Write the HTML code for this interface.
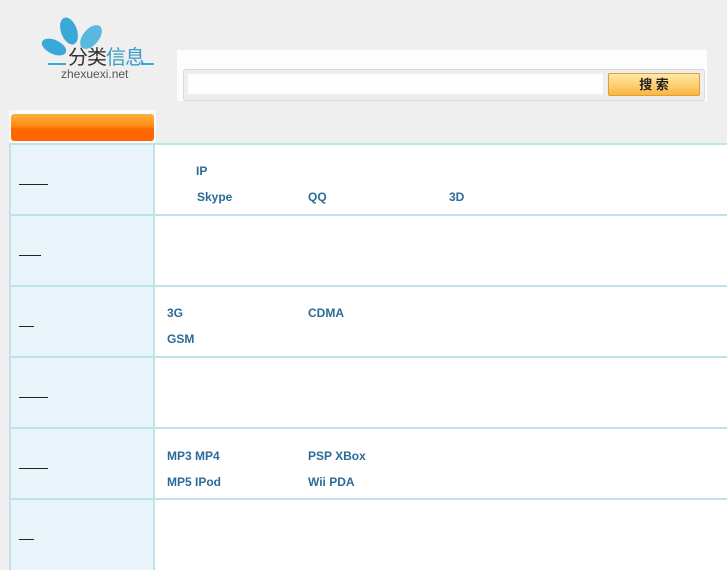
<!DOCTYPE html><html><head><meta charset="utf-8"><style>
body{margin:0;width:727px;height:545px;background:#efefef;position:relative;overflow:hidden;font-family:"Liberation Sans","Noto Sans CJK SC",sans-serif}
.a{position:absolute}
.t{position:absolute;font-size:12px;font-weight:bold;color:#2c6b98;line-height:14px}
.l{position:absolute;height:1px;background:#222;left:19px}
.row{position:absolute;left:9px;width:718px;height:70px;border-top:2px solid #bfe3ea}
.lc{position:absolute;left:0;top:0;width:146px;height:70px;background:#eaf4fb;border-left:2px solid #bfe3ea;border-right:2px solid #bfe3ea;box-sizing:border-box}
.rc{position:absolute;left:146px;top:0;right:0;height:70px;background:#fff}
</style></head><body>
<svg class="a" style="left:38px;top:15px" width="120" height="55">
<ellipse cx="31" cy="16" rx="8" ry="14" fill="#3aa8d8" transform="rotate(-20 31 16)"/>
<ellipse cx="53" cy="22" rx="8" ry="14" fill="#5ab8e0" transform="rotate(40 53 22)"/>
<ellipse cx="16" cy="32" rx="13" ry="7" fill="#3aa8d8" transform="rotate(25 16 32)"/>
<rect x="10" y="48" width="18" height="2" fill="#3aa8d8"/><rect x="103" y="48" width="13" height="2" fill="#3aa8d8"/>
</svg>
<div class="a" style="left:68px;top:47px;font-size:20px;color:#333;line-height:22px;letter-spacing:-1px">分类<span style="color:#3a9cc8">信息</span></div>
<div class="a" style="left:61px;top:67px;font-size:12px;color:#555">zhexuexi.net</div>
<div class="a" style="left:177px;top:50px;width:530px;height:51px;background:#fcfdfd"></div>
<div class="a" style="left:183px;top:69px;width:520px;height:30px;border:1px solid #d8d8d8;border-radius:3px;background:#eee"></div>
<div class="a" style="left:188px;top:74px;width:415px;height:20px;background:#fcfdfd"></div>
<div class="a" style="left:608px;top:73px;width:90px;height:21px;border:1px solid #d9a040;border-radius:2px;background:linear-gradient(#ffe9a8,#fbb640);font-size:13px;font-weight:bold;text-align:center;line-height:21px;color:#222">搜 索</div>
<div class="a" style="left:9px;top:110px;width:147px;height:34px;background:#fafafa"></div>
<div class="a" style="left:11px;top:114px;width:143px;height:27px;border-radius:3px;background:linear-gradient(#ffb040,#ff8a10 45%,#ff6a00 55%,#ff6400)"></div>
<div class="row" style="top:143px"><div class="lc"></div><div class="rc"></div></div>
<div class="row" style="top:214px"><div class="lc"></div><div class="rc"></div></div>
<div class="row" style="top:285px"><div class="lc"></div><div class="rc"></div></div>
<div class="row" style="top:356px"><div class="lc"></div><div class="rc"></div></div>
<div class="row" style="top:427px"><div class="lc"></div><div class="rc"></div></div>
<div class="row" style="top:498px;height:60px"><div class="lc"></div><div class="rc"></div></div>
<div class="l" style="top:184px;width:29px"></div>
<div class="l" style="top:255px;width:22px"></div>
<div class="l" style="top:326px;width:15px"></div>
<div class="l" style="top:397px;width:29px"></div>
<div class="l" style="top:468px;width:29px"></div>
<div class="l" style="top:539px;width:15px"></div>
<div class="t" style="left:196px;top:164px">IP</div>
<div class="t" style="left:197px;top:190px">Skype</div>
<div class="t" style="left:308px;top:190px">QQ</div>
<div class="t" style="left:449px;top:190px">3D</div>
<div class="t" style="left:167px;top:306px">3G</div>
<div class="t" style="left:308px;top:306px">CDMA</div>
<div class="t" style="left:167px;top:332px">GSM</div>
<div class="t" style="left:167px;top:449px">MP3 MP4</div>
<div class="t" style="left:308px;top:449px">PSP XBox</div>
<div class="t" style="left:167px;top:475px">MP5 IPod</div>
<div class="t" style="left:308px;top:475px">Wii PDA</div>
</body></html>
